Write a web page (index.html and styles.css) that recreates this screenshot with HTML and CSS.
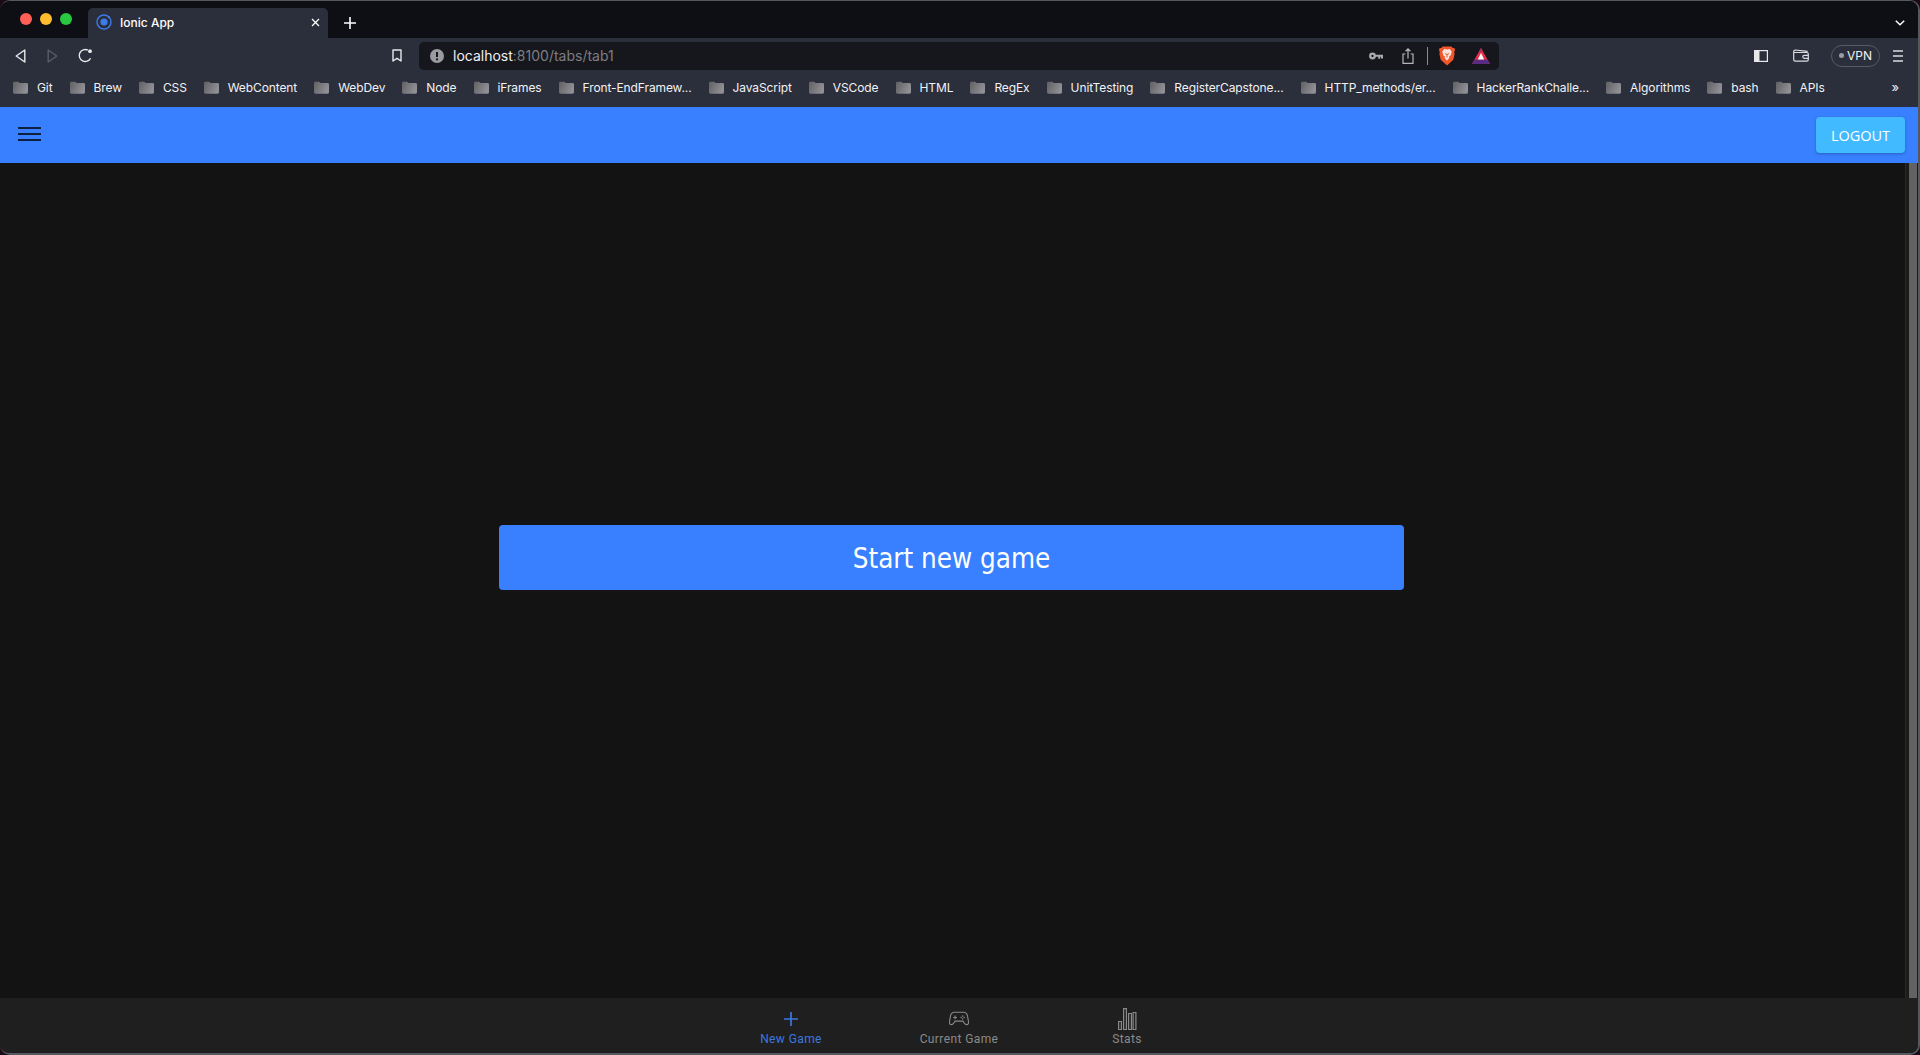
FILE: index.html
```html
<!DOCTYPE html>
<html lang="en">
<head>
<meta charset="utf-8">
<title>Ionic App</title>
<link rel="stylesheet" href="styles.css">
</head>
<body>
<svg class="defs" width="0" height="0" aria-hidden="true">
  <defs>
    <linearGradient id="fg" x1="0" y1="0" x2="1" y2="0.4">
      <stop offset="0" stop-color="#5f5f64"/>
      <stop offset="1" stop-color="#8f8f94"/>
    </linearGradient>
    <symbol id="folder" viewBox="0 0 15 13">
      <path d="M0 2.2C0 1.3.6.8 1.4.8h3.4c.6 0 .9.2 1.2.6l.5.7h7.1c.8 0 1.400.6 1.400 1.300v7.900c0 .8-.6 1.400-1.400 1.400H1.400C.6 12.700 0 12.100 0 11.300z" fill="url(#fg)"/>
    </symbol>
  </defs>
</svg>
<div class="window">
  <div class="tabstrip">
    <div class="lights"><i class="light red"></i><i class="light yellow"></i><i class="light green"></i></div>
    <div class="tab">
      <svg class="ion" viewBox="0 0 16 16"><circle cx="8" cy="8" r="7" fill="none" stroke="#3b7bea" stroke-width="1.4"/><circle cx="8" cy="8" r="3.6" fill="#3b7bea"/><circle cx="12.9" cy="3.1" r="1.2" fill="#3b7bea"/></svg>
      <span class="tab-title">Ionic App</span>
      <svg class="tab-x" viewBox="0 0 9 9"><path d="M1 1l7 7M8 1L1 8" stroke="#fff" stroke-width="1.3" fill="none"/></svg>
    </div>
    <svg class="newtab" viewBox="0 0 12 12"><path d="M6 0v12M0 6h12" stroke="#fff" stroke-width="1.6" fill="none"/></svg>
    <svg class="tabmenu" viewBox="0 0 10 6"><path d="M.8.8L5 4.8 9.2.8" stroke="#fff" stroke-width="1.5" fill="none"/></svg>
  </div>

  <div class="toolbar">
    <div class="nav">
      <svg class="ic-back" viewBox="0 0 11 14"><path d="M9.8 1L1.200 7l8.600 6z" fill="none" stroke="#e8e8ea" stroke-width="1.4" stroke-linejoin="round"/></svg>
      <svg class="ic-fwd" viewBox="0 0 11 14"><path d="M1.200 1l8.600 6-8.600 6z" fill="none" stroke="#5b5e69" stroke-width="1.4" stroke-linejoin="round"/></svg>
      <svg class="ic-reload" viewBox="0 0 15 15"><path d="M12.600 10.200A6 6 0 1 1 9.800 2" fill="none" stroke="#e8e8ea" stroke-width="1.4"/><circle cx="12" cy="3.200" r="1.900" fill="#e8e8ea"/></svg>
    </div>
    <svg class="ic-bookmark" viewBox="0 0 10 13"><path d="M1 1h8v11L5 9.300 1 12z" fill="none" stroke="#e8e8ea" stroke-width="1.4" stroke-linejoin="round"/></svg>
    <div class="urlbar">
      <svg class="ic-warn" viewBox="0 0 14 14"><circle cx="7" cy="7" r="7" fill="#9a9ba0"/><path d="M7 3v5" stroke="#16171c" stroke-width="2"/><circle cx="7" cy="10.400" r="1.100" fill="#16171c"/></svg>
      <span class="url"><span class="url-host">localhost</span>:8100/tabs/tab1</span>
      <div class="url-actions">
        <svg class="ic-key" viewBox="0 0 14 8"><circle cx="3.500" cy="4" r="2.300" fill="none" stroke="#a9aaaf" stroke-width="2.300"/><path d="M6 3.800h8M10.200 4v2.800M13 4v2.400" stroke="#a9aaaf" stroke-width="2" fill="none"/></svg>
        <svg class="ic-share" viewBox="0 0 12 16"><path d="M3.400 6H1v9.300h10V6H8.600M6 10.500V1M3.600 3.200L6 .9l2.400 2.300" fill="none" stroke="#b4b5ba" stroke-width="1.200"/></svg>
        <i class="sep"></i>
        <svg class="ic-brave" viewBox="0 0 16 20"><path d="M3.600.6h8.800l1.300 1.500 1.700-.1.600 1.900-.8 2.400.4 1.500-1.300 6L8 19.600 1.700 13.800l-1.300-6 .4-1.500L0 3.900.6 2l1.700.1z" fill="#f1562b"/><path d="M8 3.500l2.700-.4 2 2.500-.9 3.600-1.700 1.300.3 1.200L8 14.800 5.600 11.700l.3-1.200-1.700-1.300-.9-3.600 2-2.500z" fill="#fbe5dc"/><path d="M8 8.500l-2-.8M8 8.500l2-.8M8 8.500v3" stroke="#f1562b" stroke-width="1" fill="none"/></svg>
        <svg class="ic-bat" viewBox="0 0 18 16"><path d="M9 0l9 16H0z" fill="#e52f4a"/><path d="M0 16l2.800-4.500h12.400L18 16z" fill="#5b2a83"/><path d="M9 5l3.200 6.500H5.800z" fill="#fff"/><path d="M9 0l2.200 4H6.800z" fill="#b22a62"/></svg>
      </div>
    </div>
    <div class="tools">
      <svg class="ic-side" viewBox="0 0 14 12"><rect x=".6" y=".6" width="12.800" height="10.800" fill="none" stroke="#e8e8ea" stroke-width="1.200"/><rect x="1" y="1" width="4.500" height="10" fill="#e8e8ea"/></svg>
      <svg class="ic-wallet" viewBox="0 0 16 13"><path d="M14 3.500V2.300L2.500 1C1.500 1 .7 1.600.7 2.600v8c0 .9.700 1.600 1.600 1.600h11.400c.9 0 1.600-.7 1.600-1.600V5c0-.9-.7-1.500-1.600-1.500H1.200" fill="none" stroke="#dcdce0" stroke-width="1.200"/><path d="M15.300 6.300h-4a1.500 1.500 0 0 0 0 3h4" fill="none" stroke="#dcdce0" stroke-width="1.200"/></svg>
      <div class="vpn"><i class="vpn-dot"></i>VPN</div>
      <svg class="ic-menu" viewBox="0 0 10 12"><path d="M0 1h10M0 6h10M0 11h10" stroke="#dcdce0" stroke-width="1.500"/></svg>
    </div>
  </div>

  <div class="bookmarks">
    <div class="bm"><svg class="folder"><use href="#folder"/></svg><span>Git</span></div>
    <div class="bm"><svg class="folder"><use href="#folder"/></svg><span>Brew</span></div>
    <div class="bm"><svg class="folder"><use href="#folder"/></svg><span>CSS</span></div>
    <div class="bm"><svg class="folder"><use href="#folder"/></svg><span>WebContent</span></div>
    <div class="bm"><svg class="folder"><use href="#folder"/></svg><span>WebDev</span></div>
    <div class="bm"><svg class="folder"><use href="#folder"/></svg><span>Node</span></div>
    <div class="bm"><svg class="folder"><use href="#folder"/></svg><span>iFrames</span></div>
    <div class="bm"><svg class="folder"><use href="#folder"/></svg><span>Front-EndFramew...</span></div>
    <div class="bm"><svg class="folder"><use href="#folder"/></svg><span>JavaScript</span></div>
    <div class="bm"><svg class="folder"><use href="#folder"/></svg><span>VSCode</span></div>
    <div class="bm"><svg class="folder"><use href="#folder"/></svg><span>HTML</span></div>
    <div class="bm"><svg class="folder"><use href="#folder"/></svg><span>RegEx</span></div>
    <div class="bm"><svg class="folder"><use href="#folder"/></svg><span>UnitTesting</span></div>
    <div class="bm"><svg class="folder"><use href="#folder"/></svg><span>RegisterCapstone...</span></div>
    <div class="bm"><svg class="folder"><use href="#folder"/></svg><span>HTTP_methods/er...</span></div>
    <div class="bm"><svg class="folder"><use href="#folder"/></svg><span>HackerRankChalle...</span></div>
    <div class="bm"><svg class="folder"><use href="#folder"/></svg><span>Algorithms</span></div>
    <div class="bm"><svg class="folder"><use href="#folder"/></svg><span>bash</span></div>
    <div class="bm"><svg class="folder"><use href="#folder"/></svg><span>APIs</span></div>
    <span class="bm-more">»</span>
  </div>

  <header class="app-header">
    <svg class="hamburger" viewBox="0 0 23 14"><path d="M0 1h23M0 7h23M0 13h23" stroke="#000" stroke-width="1.600"/></svg>
    <button class="logout">LOGOUT</button>
  </header>

  <div class="app-body">
    <main class="content"><button class="start">Start new game</button></main>
    <div class="scrollbar"><div class="thumb"></div></div>
  </div>

  <nav class="tabbar">
    <div class="tabitem active">
      <svg class="tab-ic" viewBox="0 0 20 22"><path d="M10 4v14M3 11h14" stroke="#3a78e0" stroke-width="1.700" fill="none"/></svg>
      <span>New Game</span>
    </div>
    <div class="tabitem">
      <svg class="tab-ic" viewBox="0 0 22 24"><path d="M6 4.500h10c2.500 0 3.600 1.300 4.200 3.600l1.200 6.500c.4 2.200-.4 3.600-1.900 3.600-1.200 0-2-.8-2.900-2l-1.300-1.900H6.700l-1.300 1.900c-.9 1.200-1.700 2-2.900 2-1.500 0-2.300-1.400-1.900-3.600l1.200-6.500C2.400 5.800 3.500 4.500 6 4.500z" fill="none" stroke="#8a8a8a" stroke-width="1.200"/><path d="M4.600 10.300h4.200M6.700 8.200v4.200" stroke="#8a8a8a" stroke-width="1.100"/><path d="M15 7.800l1 1-1 1-1-1zM15 10.800l1 1-1 1-1-1zM13.300 9.300l1 1-1 1-1-1zM16.700 9.300l1 1-1 1-1-1z" fill="#8a8a8a"/></svg>
      <span>Current Game</span>
    </div>
    <div class="tabitem">
      <svg class="tab-ic" viewBox="0 0 20 22"><path d="M1.600 13.500h2.800v8H1.600zM6.600 .6h2.800v20.900H6.600zM11.600 5.500h2.800v16h-2.800zM16.100 4.500h2.800v17h-2.800z" fill="none" stroke="#8a8a8a" stroke-width="1.200"/></svg>
      <span>Stats</span>
    </div>
  </nav>
</div>
</body>
</html>
```

FILE: styles.css
```css
* { box-sizing: border-box; }
html, body { margin: 0; height: 100%; }
body { background: #1c0a16; font-family: Inter, "Liberation Sans", sans-serif; overflow: hidden; }
.defs { position: absolute; }
svg { display: block; flex: none; }

.window {
  height: 1055px;
  display: flex;
  flex-direction: column;
  border-style: solid;
  border-color: #56585d;
  border-width: 1px 2px 2px 0;
  border-radius: 10px;
  overflow: hidden;
  background: #121212;
}

/* tab strip */
.tabstrip {
  height: 37px;
  background: #0e0f14;
  display: flex;
  align-items: flex-end;
  flex: none;
  position: relative;
}
.lights { display: flex; gap: 8px; padding: 0 0 13px 20px; width: 88px; align-self: flex-end; }
.light { width: 12px; height: 12px; border-radius: 50%; }
.red { background: #ff5f57; }
.yellow { background: #febc2e; }
.green { background: #28c840; }
.tab {
  width: 240px;
  height: 30px;
  background: #2b2e3b;
  border-radius: 5px 5px 0 0;
  display: flex;
  align-items: center;
  padding: 0 8px 2px 8px;
  color: #fff;
  font-size: 12px;
  font-weight: 500;
}
.ion { width: 16px; height: 16px; }
.tab-title { margin-left: 8px; flex: 1; }
.tab-x { width: 9px; height: 9px; }
.newtab { width: 12px; height: 12px; margin: 0 0 9px 16px; }
.tabmenu { width: 10px; height: 6px; position: absolute; right: 13px; top: 19px; }

/* toolbar */
.toolbar {
  height: 35px;
  background: #2b2e3b;
  display: flex;
  align-items: center;
  flex: none;
  padding-left: 15px;
}
.nav { display: flex; align-items: center; width: 377px; }
.ic-back, .ic-fwd { width: 11px; height: 14px; }
.ic-fwd { margin-left: 21px; }
.ic-reload { width: 15px; height: 15px; margin-left: 20px; }
.ic-bookmark { width: 10px; height: 13px; }
.urlbar {
  width: 1080px;
  height: 28px;
  margin-left: 17px;
  background: #16171c;
  border-radius: 5px;
  display: flex;
  align-items: center;
  padding: 0 9px 0 11px;
  font-size: 14px;
}
.ic-warn { width: 14px; height: 14px; }
.url { margin-left: 9px; color: #7c7d83; flex: 1; }
.url-host { color: #f0f0f2; }
.url-actions { display: flex; align-items: center; }
.ic-key { width: 14px; height: 8px; }
.ic-share { width: 12px; height: 16px; margin-left: 19px; }
.sep { width: 1px; height: 18px; background: #8a8b90; margin: 0 11px 0 13px; }
.ic-brave { width: 16px; height: 20px; }
.ic-bat { width: 18px; height: 16px; margin-left: 17px; }
.tools { display: flex; align-items: center; margin-left: 255px; }
.ic-side { width: 14px; height: 12px; }
.ic-wallet { width: 16px; height: 13px; margin-left: 25px; }
.vpn {
  width: 49px;
  height: 22px;
  margin-left: 22px;
  border: 1px solid #565966;
  border-radius: 11px;
  display: flex;
  align-items: center;
  justify-content: center;
  gap: 3px;
  font-size: 12px;
  font-weight: 400;
  color: #f0f0f2;
}
.vpn-dot { width: 5px; height: 5px; border-radius: 50%; background: #9a9ba6; }
.ic-menu { width: 10px; height: 12px; margin-left: 13px; }

/* bookmarks */
.bookmarks {
  height: 34px;
  background: #2b2e3b;
  display: flex;
  align-items: center;
  flex: none;
  padding: 0 0 5px 13px;
  gap: 17px;
  font-size: 12px;
  letter-spacing: -.1px;
  color: #f2f2f4;
  position: relative;
}
.bm { display: flex; align-items: center; gap: 9px; white-space: nowrap; }
.folder { width: 15px; height: 13px; }
.bm-more { position: absolute; right: 19px; top: 6px; font-size: 13px; }

/* app header */
.app-header {
  height: 56px;
  background: #3880ff;
  display: flex;
  align-items: center;
  justify-content: space-between;
  flex: none;
  padding: 2px 13px 2px 18px;
}
.hamburger { width: 23px; height: 14px; margin-top: -3px; }
.logout {
  width: 89px;
  height: 36px;
  border: 0;
  border-radius: 4px;
  background: #42baff;
  color: #fff;
  font: 400 14.5px "Open Sans", sans-serif;
  box-shadow: 0 1px 3px rgba(0,0,0,.25);
  padding: 0;
}

/* app body */
.app-body { flex: 1; display: flex; min-height: 0; }
.content { flex: 1; display: flex; align-items: center; justify-content: center; padding: 0 2px 46px 0; background: #131313; }
.start {
  width: 905px;
  height: 65px;
  border: 0;
  border-radius: 4px;
  background: #3880ff;
  color: #fff;
  font: 400 27.5px "DejaVu Sans Condensed", "DejaVu Sans", sans-serif;
  padding: 0;
}
.scrollbar { width: 13px; background: #1c1c1c; padding: 0 1px 0 3px; border-left: 1px solid #2a2a2a; }
.thumb { height: 100%; background: #626262; }

/* tab bar */
.tabbar {
  height: 55px;
  background: #1f1f1f;
  display: flex;
  justify-content: center;
  flex: none;
}
.tabitem {
  width: 168px;
  display: flex;
  flex-direction: column;
  align-items: center;
  padding-top: 10px;
  color: #8a8a8a;
  font: 400 12px Roboto, sans-serif;
  letter-spacing: .4px;
}
.tabitem.active { color: #3a78e0; }
.tab-ic { width: 20px; height: 22px; margin-bottom: 2px; }
```
